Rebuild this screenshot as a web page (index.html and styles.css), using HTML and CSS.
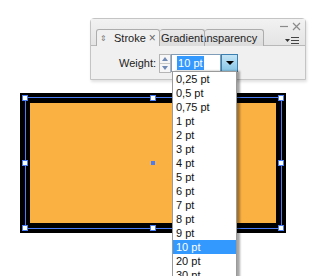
FILE: index.html
```html
<!DOCTYPE html>
<html lang="en">
<head>
<meta charset="UTF-8">
<meta name="viewport" content="width=device-width, initial-scale=1.0">
<title>Stroke weight</title>
<link rel="stylesheet" href="styles.css">
</head>
<body>

<div class="artboard">
    <!-- Rectangle on the canvas, selected -->
    <div class="shape">
        <div class="fill"></div>
        <div class="bbox"></div>
        <span class="handle h-tl"></span>
        <span class="handle h-tm"></span>
        <span class="handle h-tr"></span>
        <span class="handle h-ml"></span>
        <span class="handle h-mr"></span>
        <span class="handle h-bl"></span>
        <span class="handle h-bm"></span>
        <span class="handle h-br"></span>
        <span class="center-point"></span>
    </div>

    <!-- Stroke panel -->
    <div class="panel">
        <div class="tabbar">
            <div class="tabs">
                <div class="tab active"><span class="tab-arrows">&#8661;</span>Stroke<span class="tab-close">&times;</span></div>
                <div class="tab">Gradient</div>
                <div class="tab clipped"><span>Transparency</span></div>
            </div>
            <div class="controls">
                <svg class="win-btns" width="22" height="9" viewBox="0 0 22 9">
                    <path d="M1 4.5h8" stroke="#8a8a8a" stroke-width="1.2"/>
                    <path d="M14 1l7 7M21 1l-7 7" stroke="#8a8a8a" stroke-width="1.2"/>
                </svg>
                <svg class="menu-btn" width="15" height="9" viewBox="0 0 15 9">
                    <path d="M0 3h5l-2.5 3z" fill="#333"/>
                    <path d="M6 1.5h8M6 4.5h8M6 7.5h8" stroke="#444" stroke-width="1"/>
                </svg>
            </div>
        </div>
        <div class="panel-body">
            <label class="field-label">Weight:</label>
            <div class="spinner">
                <span class="spin up"></span>
                <span class="spin down"></span>
            </div>
            <div class="combo">
                <div class="combo-input"><span class="selected">10 pt</span></div>
                <div class="combo-btn"><span class="caret"></span></div>
            </div>
        </div>
    </div>

    <!-- Open weight list -->
    <ul class="dropdown">
        <li>0,25 pt</li>
        <li>0,5 pt</li>
        <li>0,75 pt</li>
        <li>1 pt</li>
        <li>2 pt</li>
        <li>3 pt</li>
        <li>4 pt</li>
        <li>5 pt</li>
        <li>6 pt</li>
        <li>7 pt</li>
        <li>8 pt</li>
        <li>9 pt</li>
        <li class="current">10 pt</li>
        <li>20 pt</li>
        <li>30 pt</li>
    </ul>
</div>

</body>
</html>
```

FILE: styles.css
```css
body {
    margin: 0;
    background-color: #fff;
    font-family: "Liberation Sans", Arial, sans-serif;
    font-size: 11px;
    color: #1a1a1a;
    overflow: hidden;
}

.artboard {
    position: relative;
    width: 321px;
    height: 276px;
    overflow: hidden;
}

/* rectangle */
.shape {
    position: absolute;
    left: 20px;
    top: 93px;
    width: 266px;
    height: 140px;
    box-sizing: border-box;
    padding: 10px;
    background-color: #000;
}

.fill {
    width: 100%;
    height: 100%;
    background-color: #fbb042;
}

.bbox {
    position: absolute;
    left: 5px;
    top: 4px;
    right: 4px;
    bottom: 4px;
    border: 1px solid #4a7df5;
}

.handle {
    position: absolute;
    width: 6px;
    height: 6px;
    box-sizing: border-box;
    border: 1px solid #4a7df5;
    background-color: #fff;
}

.h-tl { left: 2px; top: 2px; }
.h-tm { left: 130px; top: 2px; }
.h-tr { left: 258px; top: 2px; }
.h-ml { left: 2px; top: 67px; }
.h-mr { left: 258px; top: 67px; }
.h-bl { left: 2px; top: 132px; }
.h-bm { left: 130px; top: 132px; }
.h-br { left: 258px; top: 132px; }

.center-point {
    position: absolute;
    left: 131px;
    top: 68px;
    width: 4px;
    height: 4px;
    background-color: #4a7df5;
}

/* panel */
.panel {
    position: absolute;
    left: 90px;
    top: 18px;
    width: 216px;
    height: 62px;
    box-sizing: border-box;
    border: 1px solid #c4c4c4;
    border-radius: 4px 4px 0 0;
    background-color: #f0f0f0;
    box-shadow: 1px 2px 3px rgba(0, 0, 0, 0.12);
}

.tabbar {
    display: flex;
    height: 26px;
    background: linear-gradient(#f2f2f2, #e4e4e4);
    border-bottom: 1px solid #b8b8b8;
}

.tabs {
    display: flex;
    align-self: flex-end;
    margin-left: 5px;
    margin-bottom: -1px;
}

.tab {
    display: flex;
    align-items: center;
    height: 16px;
    box-sizing: content-box;
    padding: 0 1px;
    border: 1px solid #adadad;
    border-bottom: none;
    border-left: none;
    border-radius: 3px 3px 0 0;
    background: linear-gradient(#e9e9e9, #dcdcdc);
    color: #222;
    white-space: nowrap;
}

.tab.active {
    width: 62px;
    padding: 0;
    border-left: 1px solid #adadad;
    background: #f0f0f0;
}

.tab-arrows {
    width: 8px;
    margin: 0 6px 0 3px;
    font-size: 8px;
    color: #777;
}

.tab-close {
    margin-left: 3px;
    font-size: 12px;
    color: #666;
}

.tab.clipped {
    width: 48px;
    justify-content: flex-end;
    overflow: hidden;
    padding-left: 4px;
    padding-right: 6px;
}

.controls {
    display: flex;
    flex-direction: column;
    align-items: flex-end;
    margin-left: auto;
    padding-right: 4px;
}

.win-btns {
    display: block;
    margin-top: 3px;
}

.menu-btn {
    display: block;
    margin-top: 5px;
    margin-right: 1px;
}

.panel-body {
    display: flex;
    align-items: center;
    height: 34px;
    padding-left: 28px;
}

.field-label {
    margin-right: 3px;
    color: #222;
}

.spinner {
    display: flex;
    flex-direction: column;
    width: 12px;
    height: 19px;
    box-sizing: border-box;
    border: 1px solid #b5b5b5;
    background-color: #f6f6f6;
}

.spin {
    flex: 1;
    position: relative;
}

.spin::after {
    content: "";
    position: absolute;
    left: 2px;
    border-left: 3px solid transparent;
    border-right: 3px solid transparent;
}

.spin.up::after {
    top: 2px;
    border-bottom: 4px solid #6f8ab5;
}

.spin.down {
    border-top: 1px solid #c8c8c8;
}

.spin.down::after {
    top: 2px;
    border-top: 4px solid #6f8ab5;
}

.combo {
    display: flex;
    height: 18px;
}

.combo-input {
    display: flex;
    align-items: center;
    width: 50px;
    box-sizing: border-box;
    padding-left: 5px;
    border: 1px solid #7f9db9;
    background-color: #fff;
}

.selected {
    padding: 1px 1px;
    background-color: #3399ff;
    color: #fff;
    line-height: 12px;
}

.combo-btn {
    display: flex;
    align-items: center;
    justify-content: center;
    width: 17px;
    box-sizing: border-box;
    border: 1px solid #3c7fb1;
    background: linear-gradient(#c4e5f6, #87c4e6);
}

.caret {
    border-left: 4px solid transparent;
    border-right: 4px solid transparent;
    border-top: 4px solid #000;
}

/* list */
.dropdown {
    position: absolute;
    left: 172px;
    top: 71px;
    width: 65px;
    margin: 0;
    padding: 0;
    list-style: none;
    box-sizing: border-box;
    border: 1px solid #9a9a9a;
    border-bottom: none;
    background-color: #fff;
    box-shadow: 3px 0 2px rgba(0, 0, 0, 0.35);
}

.dropdown li {
    height: 14px;
    line-height: 14px;
    padding-left: 3px;
    color: #111;
}

.dropdown li.current {
    background-color: #3399ff;
    color: #fff;
}
```
